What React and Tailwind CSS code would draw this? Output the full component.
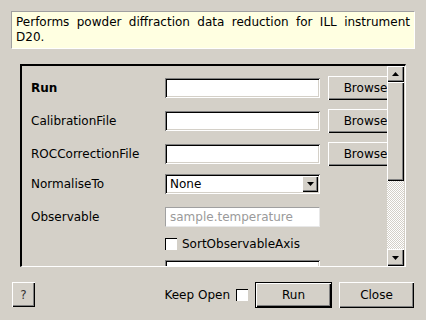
import React from "react";

const sunken =
  "shadow-[inset_1px_1px_0_#808080,inset_-1px_-1px_0_#ffffff,inset_2px_2px_0_#000000,inset_-2px_-2px_0_#d4d0c8]";
const raised =
  "shadow-[inset_1px_1px_0_#ffffff,inset_-1px_-1px_0_#000000,inset_-2px_-2px_0_#808080]";

const ArrowUp = () => (
  <svg width="7" height="4" viewBox="0 0 7 4">
    <path d="M3.5 0 L7 4 L0 4 Z" fill="#000" />
  </svg>
);

const ArrowDown = () => (
  <svg width="7" height="4" viewBox="0 0 7 4">
    <path d="M0 0 L7 0 L3.5 4 Z" fill="#000" />
  </svg>
);

const FileRow = ({ label, bold }) => (
  <div className="flex items-center h-[24px] w-max">
    <span className={`w-[134px] shrink-0 ${bold ? "font-bold" : ""}`}>
      {label}
    </span>
    <div className={`w-[155px] h-[20px] shrink-0 bg-white ${sunken}`} />
    <button
      className={`ml-[8px] w-[75px] h-[24px] shrink-0 bg-[#d4d0c8] ${raised}`}
    >
      Browse
    </button>
  </div>
);

export default function App() {
  return (
    <div
      className="w-[426px] h-[320px] bg-[#d4d0c8] text-[12px] text-black flex flex-col overflow-hidden"
      style={{ fontFamily: '"DejaVu Sans", sans-serif' }}
    >
      {/* description */}
      <div className="mt-[11px] mx-[11px] h-[38px] bg-[#ffffe1] border border-t-[#a0a0a0] border-l-[#a0a0a0] border-b-white border-r-white px-[4px] pt-[3px] leading-[15px] text-justify">
        Performs powder diffraction data reduction for ILL instrument D20.
      </div>

      {/* scroll area */}
      <div className="mt-[15px] ml-[20px] w-[386px] h-[203px] border-t-2 border-l-2 border-t-black border-l-black border-b border-r border-b-white border-r-white flex">
        <div className="w-[365px] shrink-0 h-full overflow-hidden pl-[9px] pt-[10px] flex flex-col">
          <FileRow label="Run" bold />
          <div className="mt-[9px]">
            <FileRow label="CalibrationFile" />
          </div>
          <div className="mt-[9px]">
            <FileRow label="ROCCorrectionFile" />
          </div>
          <div className="mt-[8px] flex items-center h-[20px]">
            <span className="w-[134px] shrink-0">NormaliseTo</span>
            <div
              className={`w-[155px] h-[20px] shrink-0 bg-white ${sunken} flex items-center justify-between pl-[5px] pr-[2px]`}
            >
              <span>None</span>
              <div
                className={`w-[16px] h-[16px] bg-[#d4d0c8] ${raised} flex items-center justify-center`}
              >
                <ArrowDown />
              </div>
            </div>
          </div>
          <div className="mt-[13px] flex items-center h-[20px]">
            <span className="w-[134px] shrink-0">Observable</span>
            <div className="w-[155px] h-[20px] shrink-0 bg-white border border-t-[#a0a0a0] border-l-[#a0a0a0] border-b-[#e8e8e8] border-r-[#e8e8e8] flex items-center pl-[4px] text-[#9a9a9a]">
              sample.temperature
            </div>
          </div>
          <div className="mt-[11px] flex items-center h-[12px]">
            <span className="w-[134px] shrink-0" />
            <div className="w-[12px] h-[12px] shrink-0 bg-white shadow-[inset_1px_1px_0_#000,inset_-1px_-1px_0_#fff]" />
            <span className="ml-[5px]">SortObservableAxis</span>
          </div>
          <div className="mt-[10px] flex items-center h-[20px] shrink-0">
            <span className="w-[134px] shrink-0" />
            <div className={`w-[155px] h-[20px] shrink-0 bg-white ${sunken}`} />
          </div>
        </div>

        {/* scrollbar */}
        <div className="w-[17px] shrink-0 h-full flex flex-col">
          <div
            className={`h-[16px] bg-[#d4d0c8] ${raised} flex items-center justify-center`}
          >
            <ArrowUp />
          </div>
          <div className={`h-[99px] bg-[#d4d0c8] ${raised}`} />
          <div className="flex-1 bg-[repeating-conic-gradient(#ffffff_0%_25%,#d4d0c8_0%_50%)] bg-size-[2px_2px]" />
          <div
            className={`h-[17px] bg-[#d4d0c8] ${raised} flex items-center justify-center`}
          >
            <ArrowDown />
          </div>
        </div>
      </div>

      {/* buttons */}
      <div className="mt-[15px] flex items-start pl-[12px] pr-[12px]">
        <button
          className={`w-[23px] h-[25px] bg-[#d4d0c8] ${raised} text-[#333]`}
        >
          ?
        </button>
        <div className="flex-1" />
        <div className="flex items-center h-[26px]">
          <span>Keep Open</span>
          <div className="ml-[6px] w-[12px] h-[12px] bg-white shadow-[inset_1px_1px_0_#000,inset_-1px_-1px_0_#fff]" />
        </div>
        <button
          className={`ml-[7px] w-[77px] h-[26px] bg-[#d4d0c8] border border-black ${raised}`}
        >
          Run
        </button>
        <button
          className={`ml-[7px] w-[75px] h-[26px] bg-[#d4d0c8] ${raised}`}
        >
          Close
        </button>
      </div>
    </div>
  );
}
